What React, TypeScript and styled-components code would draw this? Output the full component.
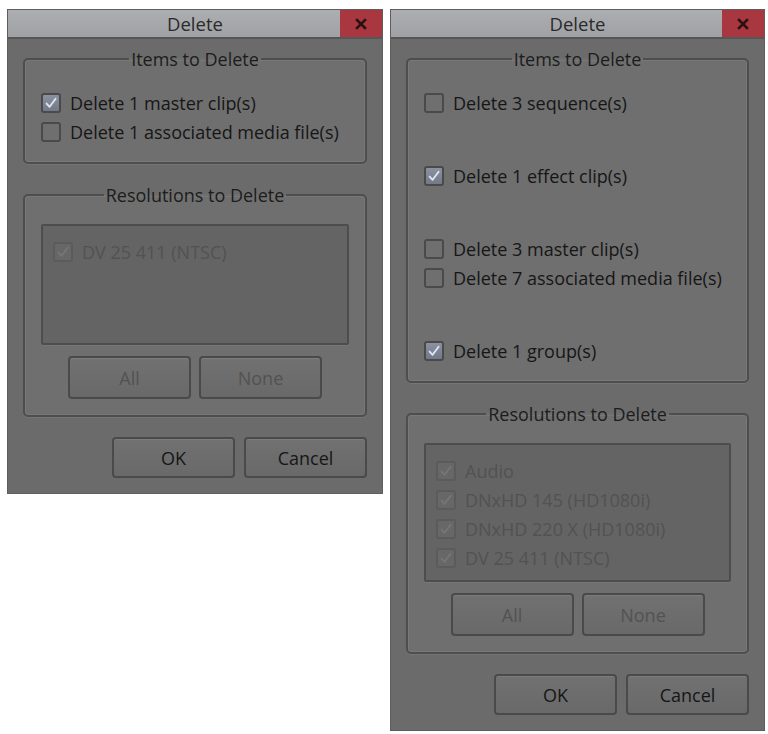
import React from "react";
import styled, { createGlobalStyle } from "styled-components";

const GlobalStyle = createGlobalStyle`
  html, body {
    margin: 0;
    background: #ffffff;
  }
  body {
    font-family: "Open Sans", "Noto Sans", "DejaVu Sans", sans-serif;
  }
`;

const Page = styled.div`
  display: flex;
  align-items: flex-start;
  gap: 7px;
  padding: 9px 0 0 7px;
`;

const Window = styled.div<{ $width: number }>`
  width: ${(p) => p.$width}px;
  box-sizing: border-box;
  display: flex;
  flex-direction: column;
  background: #6b6b6b;
  border: 1px solid #5e5e5e;
`;

const TitleBar = styled.div`
  display: grid;
  grid-template-columns: 42px 1fr 42px;
  height: 27px;
  background: linear-gradient(#acaeb1, #9fa1a5);
  border-bottom: 2px solid #565656;
`;

const Title = styled.div`
  grid-column: 2;
  display: flex;
  align-items: center;
  justify-content: center;
  font-size: 18.5px;
  color: #2a2a2a;
`;

const CloseButton = styled.div`
  grid-column: 3;
  display: flex;
  align-items: center;
  justify-content: center;
  background: #a9373f;
  color: #2a1212;
`;

const Body = styled.div`
  display: flex;
  flex-direction: column;
  padding: 10px 15px 15px;
`;

const GroupBox = styled.fieldset<{ $gapBefore?: number }>`
  margin: ${(p) => p.$gapBefore ?? 0}px 0 0;
  min-width: 0;
  padding: 19px 16px 16px;
  border: 2px solid #4e4e4e;
  border-radius: 5px;
  background: #6f6f6f;
  box-shadow: inset 0 0 0 1px #787878, 0 1px 0 #757575;
  display: flex;
  flex-direction: column;
`;

const GroupTitle = styled.legend`
  margin: 0 auto;
  padding: 0 2px;
  font-size: 18px;
  line-height: 20px;
  color: #1c1c1c;
`;

const Section = styled.div<{ $spaced?: boolean }>`
  display: flex;
  flex-direction: column;
  margin-top: ${(p) => (p.$spaced ? 44 : 0)}px;
`;

const OptionRow = styled.label<{ $dim?: boolean }>`
  display: flex;
  align-items: center;
  gap: 9px;
  height: 29px;
  font-size: 18px;
  white-space: nowrap;
  color: ${(p) => (p.$dim ? "#525252" : "#161616")};
`;

const Box = styled.span<{ $checked?: boolean; $dim?: boolean }>`
  flex: none;
  width: 20px;
  height: 20px;
  box-sizing: border-box;
  border-radius: 3px;
  display: flex;
  align-items: center;
  justify-content: center;
  border: 2px solid ${(p) => (p.$dim ? "#5b5b5b" : "#4a4a4a")};
  background: ${(p) =>
    p.$dim
      ? "#676767"
      : p.$checked
      ? "linear-gradient(#8a91a0, #737987)"
      : "#6f6f6f"};
  color: ${(p) => (p.$dim ? "#767676" : "#dde5f3")};
`;

const ListBox = styled.div<{ $height: number }>`
  height: ${(p) => p.$height}px;
  box-sizing: border-box;
  padding: 11px 10px 0;
  border: 2px solid #4d4d4d;
  border-radius: 2px;
  background: #646464;
  box-shadow: 0 1px 0 #777777;
  display: flex;
  flex-direction: column;
`;

const ButtonRow = styled.div<{ $align: "center" | "flex-end"; $top: number; $gap: number }>`
  display: flex;
  justify-content: ${(p) => p.$align};
  gap: ${(p) => p.$gap}px;
  margin-top: ${(p) => p.$top}px;
`;

const Button = styled.button<{ $height: number; $dim?: boolean }>`
  width: 123px;
  height: ${(p) => p.$height}px;
  padding: 0;
  border: 2px solid #4a4a4a;
  border-radius: 4px;
  background: linear-gradient(#717171, #696969);
  box-shadow: inset 0 1px 0 #7c7c7c;
  font-family: inherit;
  font-size: 18px;
  color: ${(p) => (p.$dim ? "#525252" : "#161616")};
`;

type Option = { label: string; checked?: boolean };

const Check = ({ checked, dim }: { checked?: boolean; dim?: boolean }) => (
  <Box $checked={checked} $dim={dim}>
    {checked && (
      <svg width="14" height="14" viewBox="0 0 14 14">
        <path
          d="M2.6 7.6 L5.6 10.8 L11.6 2.8"
          fill="none"
          stroke="currentColor"
          strokeWidth="1.9"
          strokeLinecap="round"
          strokeLinejoin="round"
        />
      </svg>
    )}
  </Box>
);

const CloseGlyph = () => (
  <svg width="12" height="12" viewBox="0 0 12 12">
    <path d="M2 2 L10 10 M10 2 L2 10" stroke="currentColor" strokeWidth="2.6" strokeLinecap="square" />
  </svg>
);

const OptionItem = ({ label, checked, dim }: Option & { dim?: boolean }) => (
  <OptionRow $dim={dim}>
    <Check checked={checked} dim={dim} />
    {label}
  </OptionRow>
);

type DialogProps = {
  width: number;
  sections: Option[][];
  resolutions: string[];
  listHeight: number;
};

const DeleteDialog = ({ width, sections, resolutions, listHeight }: DialogProps) => (
  <Window $width={width}>
    <TitleBar>
      <Title>Delete</Title>
      <CloseButton>
        <CloseGlyph />
      </CloseButton>
    </TitleBar>
    <Body>
      <GroupBox>
        <GroupTitle>Items to Delete</GroupTitle>
        {sections.map((section, i) => (
          <Section key={i} $spaced={i > 0}>
            {section.map((o) => (
              <OptionItem key={o.label} {...o} />
            ))}
          </Section>
        ))}
      </GroupBox>
      <GroupBox $gapBefore={21}>
        <GroupTitle>Resolutions to Delete</GroupTitle>
        <ListBox $height={listHeight}>
          {resolutions.map((r) => (
            <OptionItem key={r} label={r} checked dim />
          ))}
        </ListBox>
        <ButtonRow $align="center" $top={11} $gap={8}>
          <Button $height={43} $dim>
            All
          </Button>
          <Button $height={43} $dim>
            None
          </Button>
        </ButtonRow>
      </GroupBox>
      <ButtonRow $align="flex-end" $top={20} $gap={9}>
        <Button $height={41}>OK</Button>
        <Button $height={41}>Cancel</Button>
      </ButtonRow>
    </Body>
  </Window>
);

export default function App() {
  return (
    <>
      <GlobalStyle />
      <Page>
        <DeleteDialog
          width={376}
          listHeight={121}
          sections={[
            [
              { label: "Delete 1 master clip(s)", checked: true },
              { label: "Delete 1 associated media file(s)" },
            ],
          ]}
          resolutions={["DV 25 411 (NTSC)"]}
        />
        <DeleteDialog
          width={375}
          listHeight={139}
          sections={[
            [{ label: "Delete 3 sequence(s)" }],
            [{ label: "Delete 1 effect clip(s)", checked: true }],
            [
              { label: "Delete 3 master clip(s)" },
              { label: "Delete 7 associated media file(s)" },
            ],
            [{ label: "Delete 1 group(s)", checked: true }],
          ]}
          resolutions={["Audio", "DNxHD 145 (HD1080i)", "DNxHD 220 X (HD1080i)", "DV 25 411 (NTSC)"]}
        />
      </Page>
    </>
  );
}
